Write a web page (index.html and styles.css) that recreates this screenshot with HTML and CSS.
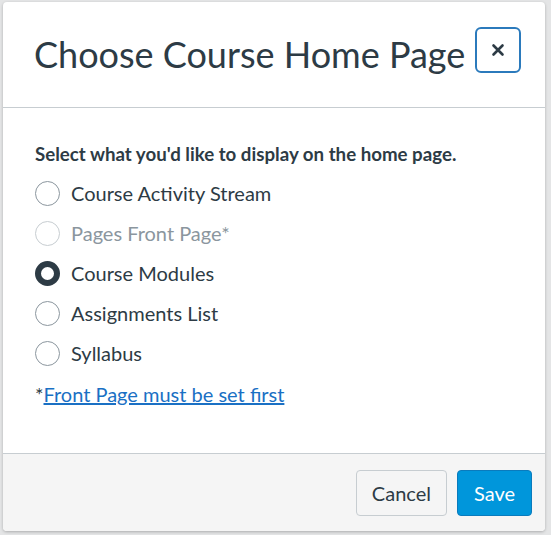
FILE: index.html
```html
<!DOCTYPE html>
<html lang="en">
<head>
<meta charset="utf-8">
<title>Choose Course Home Page</title>
<link rel="stylesheet" href="styles.css">
</head>
<body>
<div class="dialog" role="dialog" aria-labelledby="dlg-title">
  <header class="dialog-header">
    <h2 id="dlg-title" class="dialog-title">Choose Course Home Page</h2>
    <button class="close-btn" aria-label="Close">
      <svg width="14" height="14" viewBox="0 0 14 14" aria-hidden="true"><path d="M2.5 2.5 L11.5 11.5 M11.5 2.5 L2.5 11.5" stroke="#2d3b45" stroke-width="2.6" stroke-linecap="round"/></svg>
    </button>
  </header>
  <div class="dialog-body">
    <p class="prompt">Select what you'd like to display on the home page.</p>
    <ul class="options">
      <li class="option"><span class="radio"></span><span class="label">Course Activity Stream</span></li>
      <li class="option disabled"><span class="radio"></span><span class="label">Pages Front Page*</span></li>
      <li class="option checked"><span class="radio"></span><span class="label">Course Modules</span></li>
      <li class="option"><span class="radio"></span><span class="label">Assignments List</span></li>
      <li class="option"><span class="radio"></span><span class="label">Syllabus</span></li>
    </ul>
    <p class="note">*<a href="#" class="note-link">Front Page must be set first</a></p>
  </div>
  <footer class="dialog-footer">
    <button class="btn btn-default">Cancel</button>
    <button class="btn btn-primary">Save</button>
  </footer>
</div>
</body>
</html>
```
FILE: styles.css
```css
* { box-sizing: border-box; }
html, body { height: 100%; }
body {
  margin: 0;
  padding: 2px 6px 4px 3px;
  background: #e4e5e6;
  font-family: Lato, "Noto Sans", sans-serif;
  color: #2d3b45;
}
.dialog {
  width: 542px;
  height: 529px;
  background: #fff;
  border-radius: 4px;
  box-shadow: 0 1px 3px rgba(0,0,0,0.25);
  display: flex;
  flex-direction: column;
  overflow: hidden;
}
.dialog-header {
  height: 106px;
  border-bottom: 1px solid #c7cdd1;
  display: flex;
  align-items: flex-start;
  padding: 25px 24px 0 31px;
  gap: 10px;
}
.dialog-title {
  margin: 0;
  padding-top: 4px;
  font-weight: 400;
  font-size: 36px;
  line-height: 46px;
  flex: 1;
  white-space: nowrap;
}
.close-btn {
  width: 46px;
  height: 46px;
  border: 2px solid #2b7abc;
  border-radius: 6px;
  background: #fff;
  display: flex;
  align-items: center;
  justify-content: center;
  padding: 0;
}
.dialog-body {
  flex: 1;
  padding: 34px 32px 0 32px;
}
.prompt {
  margin: 0 0 7px;
  font-size: 18.7px;
  font-weight: 700;
  line-height: 24px;
  white-space: nowrap;
}
.options {
  list-style: none;
  margin: 0;
  padding: 0;
}
.option {
  display: flex;
  align-items: center;
  height: 40px;
  gap: 12px;
  font-size: 20px;
}
.radio {
  width: 25px;
  height: 25px;
  border-radius: 50%;
  border: 1px solid #8b969e;
  background: #fff;
  flex: none;
  margin-right: -1px;
}
.option.disabled { color: #8b969e; }
.option.disabled .radio { border-color: #c7cdd1; }
.option.checked .radio { border: 6px solid #2d3b45; }
.note {
  margin: 9px 0 0;
  font-size: 20px;
  line-height: 24px;
}
.note-link {
  color: #1a70c4;
  text-decoration: underline;
}
.dialog-footer {
  height: 78px;
  background: #f5f5f5;
  border-top: 1px solid #c7cdd1;
  display: flex;
  justify-content: flex-end;
  align-items: center;
  gap: 10px;
  padding: 0 13px 0 14px;
}
.btn {
  height: 46px;
  font-family: Lato, "Noto Sans", sans-serif;
  font-size: 20px;
  border-radius: 4px;
  padding: 0 15px;
}
.btn-default {
  background: #f5f5f5;
  border: 1px solid #c7cdd1;
  color: #2d3b45;
}
.btn-primary {
  padding: 0 16px;
  background: #0096db;
  border: 1px solid #0a7bbd;
  color: #fff;
}
```
